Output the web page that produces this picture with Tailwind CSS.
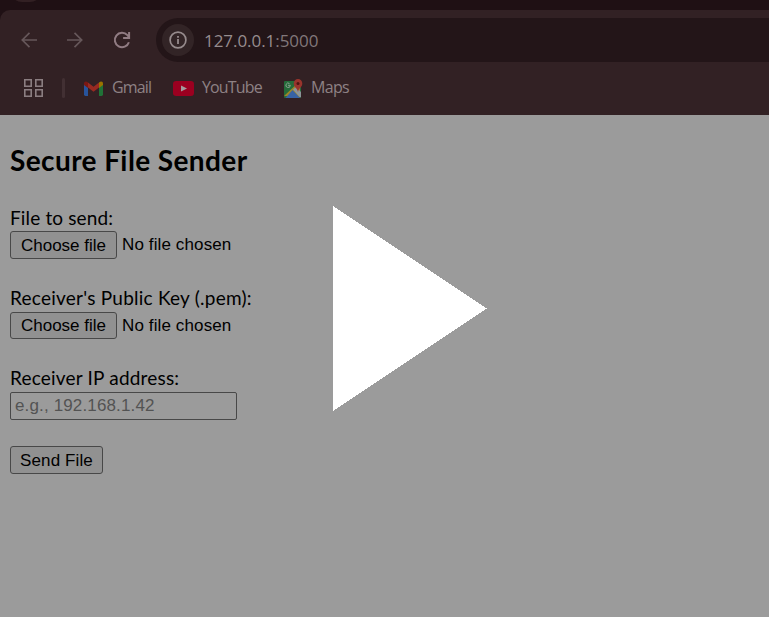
<!DOCTYPE html>
<html lang="en">
<head>
<meta charset="utf-8">
<title>Secure File Sender</title>
<script src="https://cdn.jsdelivr.net/npm/@tailwindcss/browser@4"></script>
</head>
<body class="relative flex h-[617px] w-[769px] flex-col overflow-hidden bg-[#9b9b9b] font-['Lato',sans-serif] text-black">
  <header class="flex h-[115px] shrink-0 flex-col bg-[#1f1014]">
    <div class="h-[10px] overflow-hidden pl-[10px]"><div class="-mt-[22px] h-6 w-[32px] rounded-full bg-[#322023]"></div></div>
    <div class="flex h-[105px] flex-col rounded-tl-[10px] bg-[#322124]">
      <nav class="flex h-[60px] items-center pl-[20px]">
        <svg class="h-5 w-[18px]" viewBox="0 0 18 20" fill="none" stroke="#66575a" stroke-width="1.7"><path d="M17 10H2.5M9.5 2.8L2.3 10l7.2 7.2"/></svg>
        <svg class="ml-[28px] h-5 w-[18px]" viewBox="0 0 18 20" fill="none" stroke="#66575a" stroke-width="1.7"><path d="M1 10h14.5M8.5 2.8l7.2 7.2-7.2 7.2"/></svg>
        <svg class="ml-[28px] h-5 w-5" viewBox="0 0 20 20" fill="none" stroke="#917c83" stroke-width="2"><path d="M16.9 12.2A7.2 7.2 0 1 1 15.400 5.200L17 7M17.100 2v6h-6"/></svg>
        <div class="ml-[24px] flex h-[44px] flex-1 items-center rounded-l-full bg-[#231518] pl-[6px]">
          <span class="flex h-[32px] w-[32px] items-center justify-center rounded-full bg-[#322426]">
            <svg class="h-[18px] w-[18px]" viewBox="0 0 18 18"><circle cx="9" cy="9" r="7.900" fill="none" stroke="#968b8d" stroke-width="1.700"/><path d="M8.100 8h1.800v5H8.100zM8.100 5h1.800v1.700H8.100z" fill="#968b8d"/></svg>
          </span>
          <span class="mt-[2px] ml-[10px] font-['Open_Sans','Noto_Sans',sans-serif] text-[17px] leading-6 tracking-[-0.05px] whitespace-nowrap text-[#968c8e]">127.0.0.1<span class="text-[#81777a]">:5000</span></span>
        </div>
      </nav>
      <div class="flex h-[36px] items-center pl-[24px] font-['Open_Sans','Noto_Sans',sans-serif] text-[16px] leading-6 tracking-[-0.85px] whitespace-nowrap text-[#8e8184]">
        <svg class="h-[18px] w-[19px]" viewBox="0 0 19 18" fill="none" stroke="#8b7e81" stroke-width="1.600"><path d="M.8.8h6.400v6.400H.8zM11.800.8h6.400v6.400h-6.400zM.8 10.800h6.400v6.400H.8zM11.800 10.800h6.400v6.400h-6.400z"/></svg>
        <i class="ml-[19px] h-[20px] w-[3px] rounded-full bg-[#423033]"></i>
        <svg class="ml-[19px] h-[15px] w-[19px]" viewBox="0 0 19 15"><path d="M0 3l4 3v9H1.400A1.400 1.400 0 0 1 0 13.600z" fill="#28549c"/><path d="M15 6l4-3v10.600a1.400 1.400 0 0 1-1.400 1.400H15z" fill="#207237"/><path d="M4 1.500l5.500 4.200L15 1.500v5L9.500 10.800 4 6.500z" fill="#982a22"/><path d="M15 1.500C17 -.3 19 .5 19 2.600V4l-4 3z" fill="#9a7300"/><path d="M4 1.500C2 -.3 0 .5 0 2.600V4l4 3z" fill="#7b1813"/></svg>
        <span class="mb-[2px] ml-[9px] w-[40px]">Gmail</span>
        <svg class="ml-[21px] h-[15px] w-[21px]" viewBox="0 0 21 15"><rect width="21" height="15" rx="3.200" fill="#9b0020"/><path d="M8 4.500l6 3-6 3z" fill="#a49b9d"/></svg>
        <span class="mb-[2px] ml-[8px] w-[60px]">YouTube</span>
        <svg class="ml-[21px] h-[19px] w-[20px]" viewBox="0 0 20 19"><rect x="1" y="2" width="17" height="17" rx="1" fill="#246b39"/><path d="M1 17L17 2v16z" fill="#9c8528"/><path d="M2.500 19L9.500 11l7.500 8z" fill="#3762a4"/><path d="M10 10.500L13 8l5 5v5l-1 .5z" fill="#8c9499"/><path d="M7.500 6.300H5M7.300 6.500A2.200 2.200 0 1 1 6.500 4.600" fill="none" stroke="#8c9e90" stroke-width="1"/><path d="M15 13c-.5-4-4.300-4.800-4.300-8.600a4.300 4.300 0 0 1 8.600 0C19.300 8.200 15.500 9 15 13z" fill="#98342c"/><circle cx="15" cy="4.400" r="1.500" fill="#4d1512"/></svg>
        <span class="mb-[2px] ml-[8px] tracking-[-0.7px]">Maps</span>
      </div>
    </div>
  </header>
  <main class="flex flex-col items-start pl-[10px] text-[17px] leading-[26px] whitespace-nowrap">
    <h1 class="mt-[25px] text-[28px] leading-[40px] font-bold tracking-[0.4px]">Secure File Sender</h1>
    <label class="mt-[25px] text-[19px] tracking-[0.15px]">File to send:</label>
    <div class="flex items-center font-['Liberation_Sans',sans-serif]"><button class="h-[28px] w-[107px] rounded-[3px] border border-[#484848] bg-[#919191] pt-px leading-[26px]">Choose file</button><span class="ml-[5px] -mt-px tracking-[0.12px]">No file chosen</span></div>
    <label class="mt-[26px] text-[19px] tracking-[0.24px]">Receiver's Public Key (.pem):</label>
    <div class="mt-px flex items-center font-['Liberation_Sans',sans-serif]"><button class="h-[27px] w-[107px] rounded-[3px] border border-[#484848] bg-[#919191] leading-[25px]">Choose file</button><span class="ml-[5px] tracking-[0.12px]">No file chosen</span></div>
    <label class="mt-[26px] text-[19px] tracking-[0.2px]">Receiver IP address:</label>
    <input class="mt-px h-[28px] w-[227px] rounded-[2px] border border-[#484848] bg-[#9b9b9b] px-[4px] font-['Liberation_Sans',sans-serif] tracking-[0.14px] placeholder:text-[#535353]" placeholder="e.g., 192.168.1.42">
    <button class="mt-[26px] h-[28px] w-[93px] rounded-[3px] border border-[#484848] bg-[#919191] pt-px font-['Liberation_Sans',sans-serif] leading-[26px] tracking-[0.12px]">Send File</button>
  </main>
  <svg class="absolute top-[206px] left-[333px] h-[205px] w-[154px]" viewBox="0 0 154 205" shape-rendering="crispEdges"><path d="M0 0l154 102.500L0 205z" fill="#fff"/></svg>
</body>
</html>
